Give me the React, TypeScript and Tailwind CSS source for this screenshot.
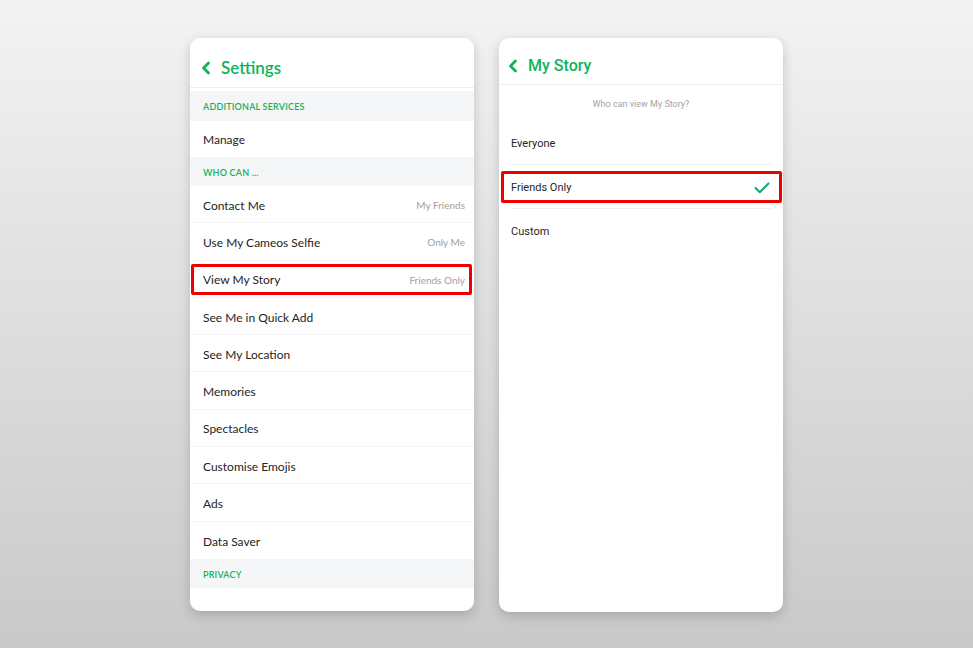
const GREEN = "text-[#10b35b]";

const Chevron = () => (
  <svg width="10" height="14" viewBox="0 0 10 14" className="mr-[10px]">
    <polyline
      points="7.5,2 2.5,7 7.5,12"
      fill="none"
      stroke="#10b35b"
      strokeWidth="2.8"
      strokeLinecap="round"
      strokeLinejoin="round"
    />
  </svg>
);

const Section = ({ label, h }: { label: string; h: string }) => (
  <div
    className={`${h} bg-[#f5f6f8] flex items-center pl-[13px] pt-[2px] text-[9px] font-semibold tracking-[0.2px] ${GREEN}`}
  >
    {label}
  </div>
);

type Row = { label: string; value?: string; selected?: boolean };

const whoCan: Row[] = [
  { label: "Contact Me", value: "My Friends" },
  { label: "Use My Cameos Selfie", value: "Only Me" },
  { label: "View My Story", value: "Friends Only", selected: true },
  { label: "See Me in Quick Add" },
  { label: "See My Location" },
  { label: "Memories" },
  { label: "Spectacles" },
  { label: "Customise Emojis" },
  { label: "Ads" },
  { label: "Data Saver" },
];

const SettingsCard = () => (
  <div className="w-[284px] h-[573px] bg-white rounded-[10px] shadow-[0_4px_12px_rgba(0,0,0,0.18)] overflow-hidden font-['Lato',sans-serif] flex flex-col">
    <div className="h-[50px] border-b border-[#f0f0f0] flex items-center pl-[11px] pt-[10px]">
      <Chevron />
      <span className={`text-[17px] font-semibold ${GREEN}`}>Settings</span>
    </div>
    <div className="h-[3px]" />
    <Section label="ADDITIONAL SERVICES" h="h-[30px]" />
    <div className="h-[36px] flex items-center pl-[13px] pt-[2px] text-[12px] text-[#242424]">
      Manage
    </div>
    <Section label="WHO CAN ..." h="h-[29px]" />
    {whoCan.map((row, i) => (
      <div
        key={row.label}
        className={`relative h-[37.3px] flex items-center justify-between pl-[13px] pr-[9px] pt-[3px] ${
          i < whoCan.length - 1 ? "border-b border-[#f5f5f5]" : ""
        }`}
      >
        <span className="text-[12px] text-[#242424]">{row.label}</span>
        {row.value && (
          <span className="text-[10px] text-[#a0a0a0]">{row.value}</span>
        )}
        {row.selected && (
          <div className="absolute left-[1px] right-[2px] top-[3px] bottom-[2px] border-[3px] border-[#ee0000] rounded-[2px]" />
        )}
      </div>
    ))}
    <Section label="PRIVACY" h="h-[29px]" />
  </div>
);

const options: Row[] = [
  { label: "Everyone" },
  { label: "Friends Only", selected: true },
  { label: "Custom" },
];

const StoryCard = () => (
  <div className="w-[284px] h-[574px] bg-white rounded-[10px] shadow-[0_4px_12px_rgba(0,0,0,0.18)] overflow-hidden font-['Roboto',sans-serif] flex flex-col">
    <div className="h-[47px] border-b border-[#f0f0f0] flex items-center pl-[9px] pt-[10px]">
      <Chevron />
      <span className={`text-[16px] font-medium ${GREEN}`}>My Story</span>
    </div>
    <div className="h-[36px] flex items-center justify-center pt-[4px] text-[9px] text-[#a3a3a3]">
      Who can view My Story?
    </div>
    {options.map((row, i) => (
      <div key={row.label} className="relative px-[12px]">
        <div
          className={`h-[44px] flex items-center justify-between pt-[3px] ${
            i < options.length - 1 ? "border-b border-[#f0f0f0]" : ""
          }`}
        >
          <span className="text-[11px] text-[#262626]">{row.label}</span>
          {row.selected && (
            <svg width="16" height="12" viewBox="0 0 16 12" className="mr-[1px]">
              <polyline
                points="1.5,6 5.8,10.2 14.5,1.5"
                fill="none"
                stroke="#10a47c"
                strokeWidth="2"
                strokeLinecap="round"
                strokeLinejoin="round"
              />
            </svg>
          )}
        </div>
        {row.selected && (
          <div className="absolute left-[2px] right-[1px] top-[6px] bottom-[6px] border-[3px] border-[#ee0000] rounded-[2px]" />
        )}
      </div>
    ))}
  </div>
);

export default function App() {
  return (
    <div className="w-[973px] h-[648px] bg-gradient-to-b from-[#f3f3f3] to-[#c9c9c9] flex justify-center items-start gap-[25px] pt-[38px]">
      <SettingsCard />
      <StoryCard />
    </div>
  );
}
